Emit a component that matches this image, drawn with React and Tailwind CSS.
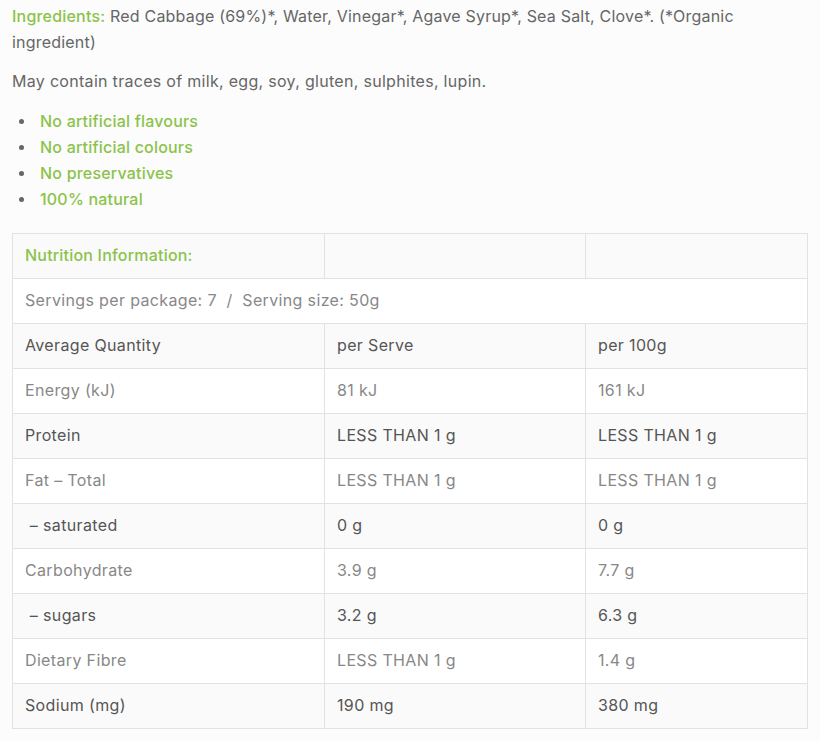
import React from "react";

const rows = [
  ["Average Quantity", "per Serve", "per 100g"],
  ["Energy (kJ)", "81 kJ", "161 kJ"],
  ["Protein", "LESS THAN 1 g", "LESS THAN 1 g"],
  ["Fat – Total", "LESS THAN 1 g", "LESS THAN 1 g"],
  ["\u00a0– saturated", "0 g", "0 g"],
  ["Carbohydrate", "3.9 g", "7.7 g"],
  ["\u00a0– sugars", "3.2 g", "6.3 g"],
  ["Dietary Fibre", "LESS THAN 1 g", "1.4 g"],
  ["Sodium (mg)", "190 mg", "380 mg"],
];

const bullets = [
  "No artificial flavours",
  "No artificial colours",
  "No preservatives",
  "100% natural",
];

export default function App() {
  return (
    <div
      className="min-h-[742px] bg-[#fcfcfc] px-[12px] pt-[3px] text-[16px] text-[#666]"
      style={{ fontFamily: "Inter, 'Open Sans', sans-serif" }}
    >
      <p className="w-[790px] leading-[26px] tracking-[0.2px]">
        <span className="font-medium text-[#8bc34a]">Ingredients:</span>{" "}
        <span>Red Cabbage (69%)*, Water, Vinegar*, Agave Syrup*, Sea Salt, Clove*. (*Organic ingredient)</span>
      </p>
      <p className="mt-[13px] leading-[26px] tracking-[0.3px]">
        May contain traces of milk, egg, soy, gluten, sulphites, lupin.
      </p>
      <ul className="mt-[14px]">
        {bullets.map((b) => (
          <li key={b} className="flex items-center leading-[26px]">
            <span className="ml-[7px] mr-[16px] h-[5px] w-[5px] rounded-full bg-[#666]"></span>
            <span className="font-medium text-[#8bc34a] tracking-[0.2px]">{b}</span>
          </li>
        ))}
      </ul>
      <table className="mt-[21px] w-[795px] table-fixed border-collapse border border-[#e2e2e2] tracking-[0.35px]">
        <colgroup>
          <col className="w-[312px]" />
          <col className="w-[261px]" />
          <col className="w-[222px]" />
        </colgroup>
        <tbody>
          <tr className="h-[45px] bg-[#fafafa]">
            <td className="border border-[#e2e2e2] px-[12px] pb-[2px] font-medium text-[#8bc34a] tracking-[0.2px]">
              Nutrition Information:
            </td>
            <td className="border border-[#e2e2e2]"></td>
            <td className="border border-[#e2e2e2]"></td>
          </tr>
          <tr className="h-[45px] bg-white">
            <td colSpan={3} className="border border-[#e2e2e2] px-[12px] pb-[2px] text-[#888]">
              Servings per package: 7&nbsp; /&nbsp; Serving size: 50g
            </td>
          </tr>
          {rows.map((r, i) => {
            const dark = i % 2 === 0;
            return (
              <tr key={i} className={`h-[45px] ${dark ? "bg-[#fafafa] text-[#555]" : "bg-white text-[#888]"}`}>
                {r.map((c, j) => (
                  <td key={j} className="border border-[#e2e2e2] px-[12px] pb-[2px] whitespace-pre">
                    {c}
                  </td>
                ))}
              </tr>
            );
          })}
        </tbody>
      </table>
    </div>
  );
}
